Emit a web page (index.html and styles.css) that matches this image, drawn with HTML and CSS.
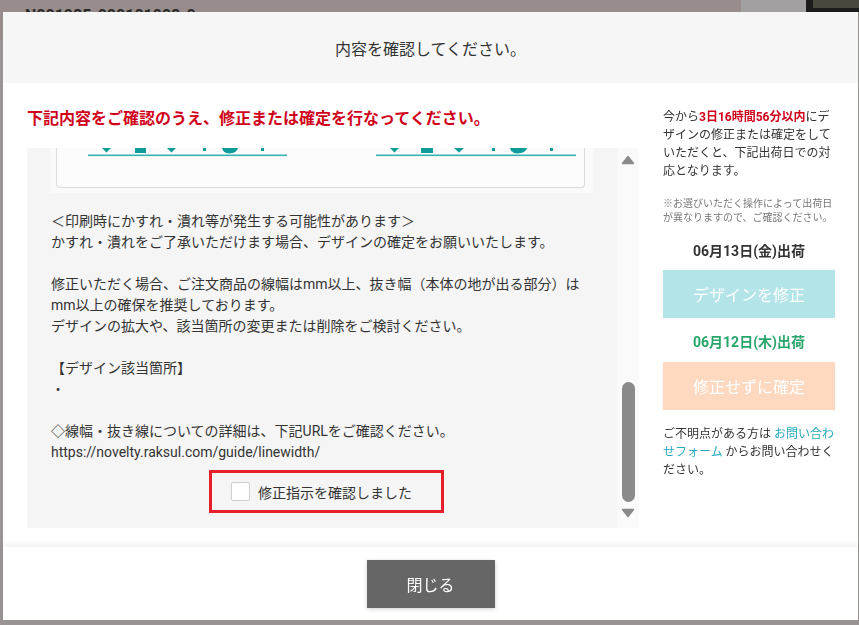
FILE: index.html
```html
<!DOCTYPE html>
<html lang="ja">

<head>
    <meta charset="UTF-8">
    <meta name="viewport" content="width=device-width, initial-scale=1.0">
    <title>内容を確認</title>
    <link rel="stylesheet" href="styles.css">
</head>

<body>
    <!-- 後ろのページ(オーバーレイで暗くなっている) -->
    <div class="page">
        <div class="page-head">
            <span class="order-no">N001985-000101998-0</span>
            <span class="head-strip"></span>
            <span class="head-box"></span>
        </div>
    </div>

    <!-- 確認モーダル -->
    <div class="modal">
        <div class="modal-head">内容を確認してください。</div>

        <div class="modal-body">
            <div class="main">
                <p class="alert">下記内容をご確認のうえ、修正または確定を行なってください。</p>

                <div class="scroll">
                    <div class="scroll-content">
                        <div class="preview">
                            <div class="preview-card">
                                <svg class="preview-art" width="527" height="9" viewBox="0 0 527 9">
                                    <g fill="#0f9b97">
                                        <polygon points="45,0 54,0 49.5,4.5" />
                                        <rect x="78" y="0" width="11" height="5" />
                                        <polygon points="110,0 119,0 114.5,4.5" />
                                        <rect x="146" y="0" width="3" height="3" />
                                        <path d="M165 0 H181 Q180 5 172 5.5 Q166 5 165 0 Z" />
                                        <rect x="204" y="0" width="3" height="3" />
                                        <polygon points="333,0 342,0 337.5,4.5" />
                                        <rect x="364" y="0" width="12" height="5" />
                                        <polygon points="397,0 407,0 402,4.5" />
                                        <rect x="435" y="0" width="3" height="3" />
                                        <path d="M453 0 H470 Q469 5 460 5.5 Q454 5 453 0 Z" />
                                        <rect x="493" y="0" width="3" height="3" />
                                    </g>
                                    <g fill="#34b3b1">
                                        <rect x="31" y="6.5" width="199" height="1.6" />
                                        <rect x="319" y="6.5" width="200" height="1.6" />
                                    </g>
                                </svg>
                            </div>
                        </div>

                        <p class="note">
                            ＜印刷時にかすれ・潰れ等が発生する可能性があります＞<br>
                            かすれ・潰れをご了承いただけます場合、デザインの確定をお願いいたします。<br>
                            <br>
                            修正いただく場合、ご注文商品の線幅はmm以上、抜き幅（本体の地が出る部分）は<br>
                            mm以上の確保を推奨しております。<br>
                            デザインの拡大や、該当箇所の変更または削除をご検討ください。<br>
                            <br>
                            【デザイン該当箇所】<br>
                            ・<br>
                            <br>
                            ◇線幅・抜き線についての詳細は、下記URLをご確認ください。<br>
                            https://novelty.raksul.com/guide/linewidth/
                        </p>

                        <label class="confirm">
                            <span class="check"></span>
                            修正指示を確認しました
                        </label>
                    </div>

                    <!-- スクロールバー -->
                    <div class="scrollbar">
                        <svg class="arrow" width="14" height="10" viewBox="0 0 14 10">
                            <path d="M7 1.5 L12.5 8.5 L1.5 8.5 Z" fill="#8a8a8a" stroke="#8a8a8a" stroke-width="1.5" stroke-linejoin="round" />
                        </svg>
                        <div class="track"><span class="thumb"></span></div>
                        <svg class="arrow" width="14" height="10" viewBox="0 0 14 10">
                            <path d="M1.5 1.5 L12.5 1.5 L7 8.5 Z" fill="#8a8a8a" stroke="#8a8a8a" stroke-width="1.5" stroke-linejoin="round" />
                        </svg>
                    </div>
                </div>
            </div>

            <div class="side">
                <p class="lead">今から<strong>3日16時間56分以内</strong>にデザインの修正または確定をしていただくと、下記出荷日での対応となります。</p>
                <p class="caution">※お選びいただく操作によって出荷日が異なりますので、ご確認ください。</p>

                <p class="ship">06月13日(金)出荷</p>
                <button class="btn btn-fix">デザインを修正</button>

                <p class="ship ship-green">06月12日(木)出荷</p>
                <button class="btn btn-ok">修正せずに確定</button>

                <p class="contact">ご不明点がある方は <a href="#">お問い合わせフォーム</a> からお問い合わせください。</p>
            </div>
        </div>

        <div class="modal-foot">
            <button class="close">閉じる</button>
        </div>
    </div>
</body>

</html>
```

FILE: styles.css
```css
body {
    margin: 0;
    background-color: #9a9494;
    font-family: Roboto, "Noto Sans CJK JP", sans-serif;
    color: #333;
}

p {
    margin: 0;
}

/* 後ろのページ */
.page {
    height: 625px;
    overflow: hidden;
}

.page-head {
    display: flex;
    height: 40px;
    background-color: #998c8c;
}

.order-no {
    flex: 1;
    padding: 7px 0 0 25px;
    font-size: 16px;
    font-weight: bold;
    line-height: 18px;
    color: #2c2828;
}

.head-strip {
    width: 65px;
    background-color: #a2a0a0;
}

.head-box {
    width: 46px;
    height: 8px;
    background-color: #48483f;
    border-left: 7px solid #1c1c1c;
    border-bottom: 4px solid #1c1c1c;
}

/* モーダル */
.modal {
    position: fixed;
    left: 3px;
    top: 12px;
    width: 855px;
    height: 608px;
    display: flex;
    flex-direction: column;
    background-color: #fff;
}

.modal-head {
    height: 71px;
    display: flex;
    align-items: center;
    justify-content: center;
    background-color: #f6f6f6;
    font-size: 16px;
}

.modal-body {
    flex: 1;
    display: flex;
    gap: 24px;
    padding: 25px 23px 19px 24px;
    min-height: 0;
}

.main {
    width: 612px;
    display: flex;
    flex-direction: column;
}

.alert {
    font-size: 16px;
    font-weight: bold;
    line-height: 22px;
    color: #d0021b;
}

.scroll {
    flex: 1;
    display: flex;
    margin-top: 18px;
    min-height: 0;
    background-color: #f5f5f5;
}

.scroll-content {
    flex: 1;
    overflow: hidden;
    padding: 0 24px;
}

.preview {
    padding: 0 8px 5px 5px;
    background-color: #fafafa;
}

.preview-card {
    height: 39px;
    background-color: #fbfcfb;
    border: 1px solid #dcdcdc;
    border-top: none;
    border-radius: 0 0 4px 4px;
}

.preview-art {
    display: block;
}

.note {
    margin-top: 18px;
    font-size: 14px;
    line-height: 21px;
}

.confirm {
    display: flex;
    align-items: center;
    gap: 8px;
    width: 235px;
    height: 43px;
    box-sizing: border-box;
    margin: 7px 0 0 158px;
    padding-left: 19px;
    border: 3px solid #e5202a;
    font-size: 14px;
}

.check {
    width: 19px;
    height: 19px;
    box-sizing: border-box;
    background-color: #fff;
    border: 1px solid #cfcfcf;
    border-radius: 2px;
}

.scrollbar {
    width: 22px;
    display: flex;
    flex-direction: column;
    align-items: center;
    padding: 7px 0 10px;
    background-color: #fafafa;
}

.arrow {
    display: block;
}

.track {
    flex: 1;
    display: flex;
    flex-direction: column;
}

.thumb {
    width: 13px;
    height: 120px;
    margin-top: auto;
    margin-bottom: 6px;
    border-radius: 7px;
    background-color: #8a8a8a;
}

/* 右カラム */
.side {
    width: 172px;
    display: flex;
    flex-direction: column;
    font-size: 12px;
    line-height: 18px;
}

.lead strong {
    color: #d0021b;
}

.caution {
    margin-top: 17px;
    font-size: 10px;
    line-height: 14px;
    color: #777;
}

.ship {
    margin-top: 16px;
    font-size: 14px;
    font-weight: bold;
    line-height: 20px;
    text-align: center;
}

.ship-green {
    margin-top: 14px;
    color: #28a56a;
}

.btn {
    height: 48px;
    margin-top: 9px;
    border: none;
    font-family: inherit;
    font-size: 16px;
    color: #fff;
    box-shadow: 0 0 3px rgba(0, 0, 0, 0.05);
}

.btn-fix {
    background-color: #b3e4e8;
}

.btn-ok {
    margin-top: 10px;
    background-color: #ffd9bf;
}

.contact {
    margin-top: 15px;
}

.contact a {
    color: #27a9be;
    text-decoration: none;
}

/* フッター */
.modal-foot {
    height: 73px;
    box-sizing: border-box;
    display: flex;
    justify-content: center;
    padding-top: 13px;
    background-color: #fff;
    box-shadow: 0 -3px 6px rgba(0, 0, 0, 0.06);
}

.close {
    width: 128px;
    height: 48px;
    border: none;
    background-color: #666;
    color: #fff;
    font-family: inherit;
    font-size: 16px;
    box-shadow: 0 1px 4px rgba(0, 0, 0, 0.2);
}
```
